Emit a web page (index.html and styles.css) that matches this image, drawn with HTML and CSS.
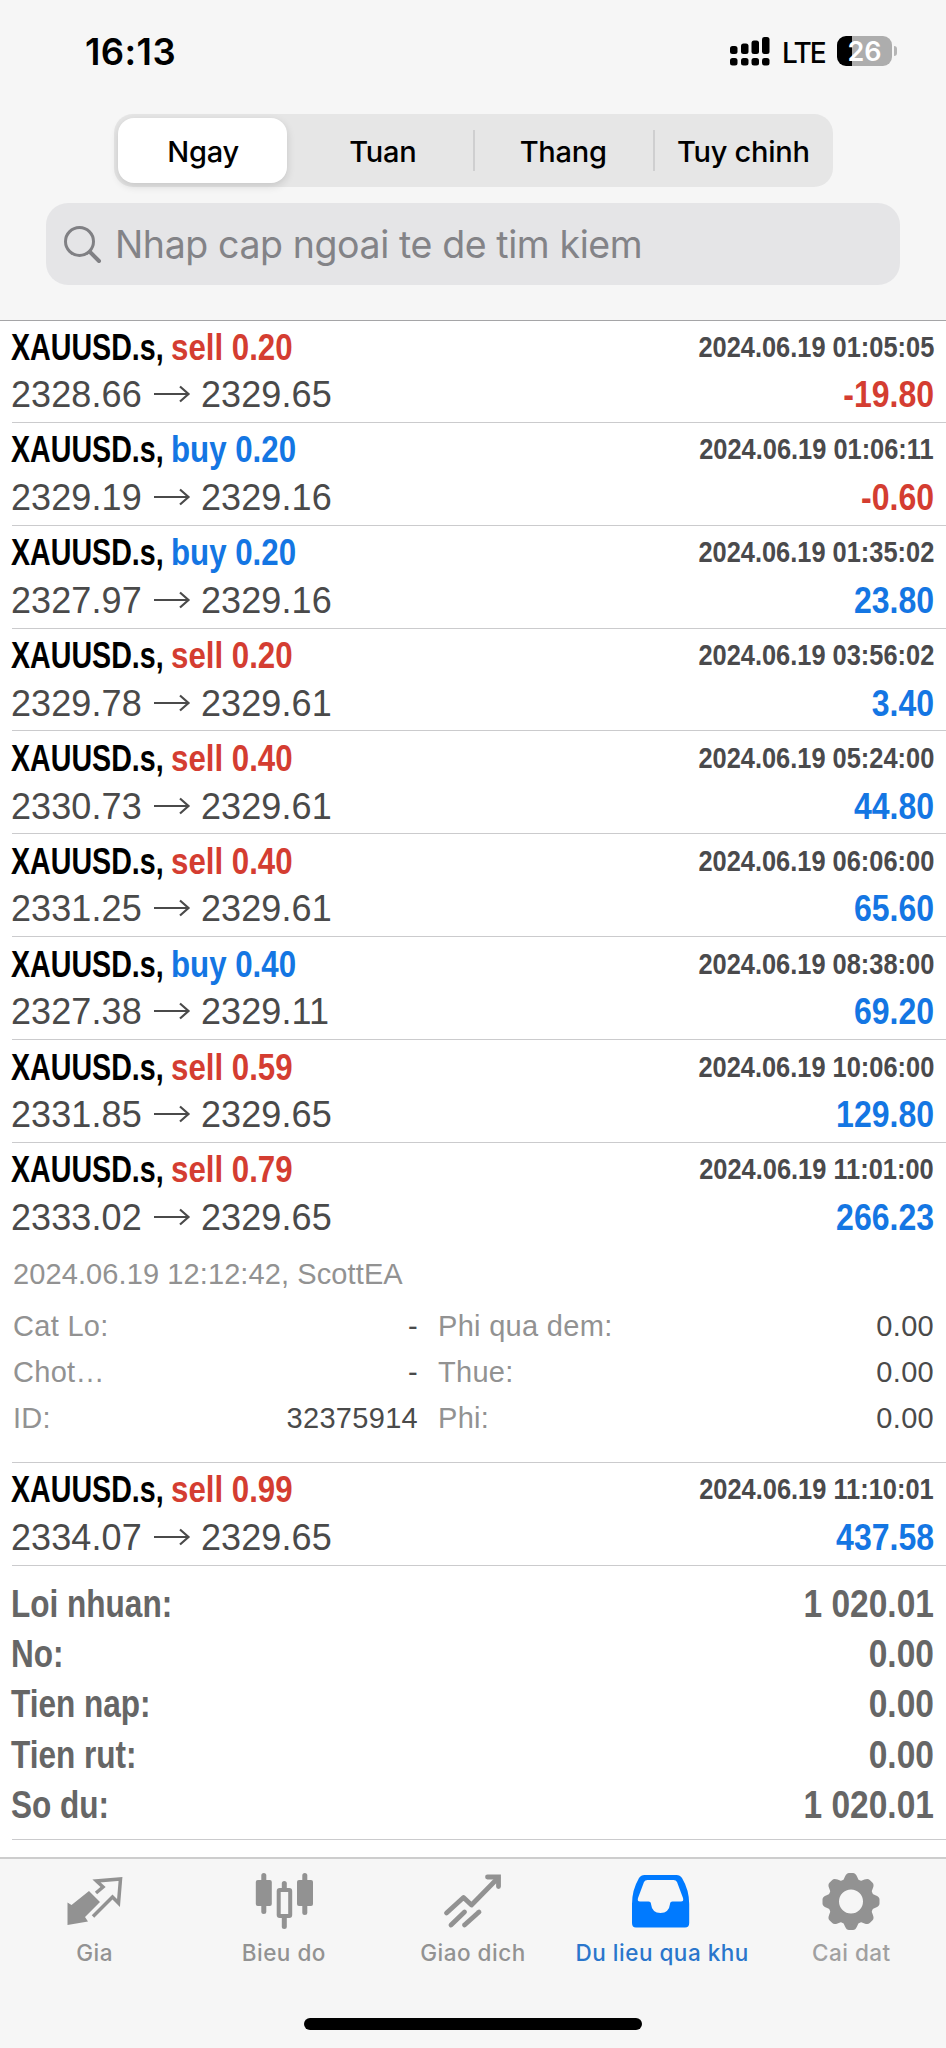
FILE: index.html
```html
<!DOCTYPE html>
<html lang="vi">
<head>
<meta charset="utf-8">
<title>Du lieu qua khu</title>
<link rel="stylesheet" href="styles.css">
</head>
<body>
<div class="screen">
<header class="header">
<div class="status">
<span class="time">16:13</span>
<svg class="signal" width="40" height="30" viewBox="0 0 40 30"><g><rect x="0" y="9" width="7.500" height="8" rx="2.5"/><rect x="11" y="6.500" width="7.500" height="10.500" rx="2.5"/><rect x="21.500" y="3.500" width="7.500" height="13.500" rx="2.5"/><rect x="32" y="0" width="7.500" height="17" rx="2.500"/><rect x="0" y="21" width="7.500" height="7.500" rx="2.500"/><rect x="11" y="21" width="7.500" height="7.500" rx="2.500"/><rect x="21.500" y="21" width="7.500" height="7.500" rx="2.500"/><rect x="32" y="21" width="7.500" height="7.500" rx="2.500"/></g></svg>
<span class="lte">LTE</span>
<span class="battery">26</span><span class="battery-tip"></span>
</div>
<nav class="segments"><span class="segment selected">Ngay</span><span class="segment">Tuan</span><span class="segment divided">Thang</span><span class="segment divided">Tuy chinh</span></nav>
<div class="search">
<svg width="40" height="40" viewBox="0 0 40 40"><circle cx="16.500" cy="17.500" r="14" fill="none" stroke="#808084" stroke-width="3"/><path d="M27 28L36 37" stroke="#808084" stroke-width="4" stroke-linecap="round"/></svg>
<span class="placeholder">Nhap cap ngoai te de tim kiem</span>
</div>
</header>
<main class="list" id="list"></main>
<section class="totals">
<div class="total"><span class="name">Loi nhuan:</span><span class="sum">1 020.01</span></div>
<div class="total"><span class="name">No:</span><span class="sum">0.00</span></div>
<div class="total"><span class="name">Tien nap:</span><span class="sum">0.00</span></div>
<div class="total"><span class="name">Tien rut:</span><span class="sum">0.00</span></div>
<div class="total"><span class="name">So du:</span><span class="sum">1 020.01</span></div>
</section>
<footer class="tabbar">
<div class="tabs">
<div class="tab"><svg width="60" height="60" viewBox="0 0 60 60"><path d="M2.500 22.500L6.500 25L24 11L35 22L20 37L23 41.500L2.500 45Z" fill="#929292"/><path d="M31 13L38 7L31.500 1L55.500 -1L53.500 23L47.500 17L28 36.500" fill="none" stroke="#929292" stroke-width="3.500"/></svg><span>Gia</span></div>
<div class="tab"><svg width="60" height="60" viewBox="0 0 60 60"><g fill="#929292"><rect x="7.300" y="-7" width="5" height="41" rx="2.500"/><rect x="1.800" y="0" width="16" height="26" rx="2"/><rect x="48.300" y="-7" width="5" height="42" rx="2.500"/><rect x="43" y="0" width="16" height="26" rx="2"/><rect x="27.800" y="1" width="5" height="9" rx="2.500"/><rect x="27.800" y="35" width="5" height="14" rx="2.500"/></g><rect x="24.700" y="10" width="11.500" height="26" rx="1" fill="none" stroke="#929292" stroke-width="4"/></svg><span>Bieu do</span></div>
<div class="tab"><svg width="60" height="60" viewBox="0 0 60 60"><g fill="none" stroke="#929292" stroke-width="4.800" stroke-linecap="round" stroke-linejoin="round"><path d="M3.500 33L20.500 17.500L28.500 25L55 -2"/><path d="M44.500 -3H55.500V6.500" stroke-linejoin="miter"/><path d="M8 45L21.500 32"/><path d="M21.500 45L36 32"/></g></svg><span>Giao dich</span></div>
<div class="tab active"><svg width="60" height="60" viewBox="0 0 60 60"><path fill="#007aff" fill-rule="evenodd" d="M12.500 -5H44.500Q48 -5 50 -2Q57.200 10 57.200 24V43Q57.200 47.500 53 47.500H4Q0 47.500 0 43V24Q0 10 7 -2Q9 -5 12.500 -5ZM15.500 0Q13 0 12 2L6 18Q5 21.500 8 21.500H16.500Q19 21.500 19 24Q20 33 28.500 33Q37 33 38 24Q38 21.500 40.500 21.500H49Q52 21.500 51 18L45 2Q44 0 41.500 0Z"/></svg><span>Du lieu qua khu</span></div>
<div class="tab faint"><svg width="60" height="60" viewBox="0 0 60 60"><g id="gear" fill="#929292"></g><circle cx="30" cy="21.500" r="17.500" fill="none" stroke="#929292" stroke-width="11"/></svg><span>Cai dat</span></div>
</div>
<div class="home"></div>
</footer>
</div>
<script src="app.js"></script>
</body>
</html>
```
FILE: app.js
```js
const deals = [
  ['sell', '0.20', '2328.66', '2329.65', '01:05:05', '-19.80'],
  ['buy', '0.20', '2329.19', '2329.16', '01:06:11', '-0.60'],
  ['buy', '0.20', '2327.97', '2329.16', '01:35:02', '23.80'],
  ['sell', '0.20', '2329.78', '2329.61', '03:56:02', '3.40'],
  ['sell', '0.40', '2330.73', '2329.61', '05:24:00', '44.80'],
  ['sell', '0.40', '2331.25', '2329.61', '06:06:00', '65.60'],
  ['buy', '0.40', '2327.38', '2329.11', '08:38:00', '69.20'],
  ['sell', '0.59', '2331.85', '2329.65', '10:06:00', '129.80'],
  ['sell', '0.79', '2333.02', '2329.65', '11:01:00', '266.23', true],
  ['sell', '0.99', '2334.07', '2329.65', '11:10:01', '437.58']
];

const details = `<div class="details">
  <div class="closed">2024.06.19 12:12:42, ScottEA</div>
  <div class="fields">
    <span>Cat Lo:</span><b>-</b><span class="second">Phi qua dem:</span><b>0.00</b>
    <span>Chot…</span><b>-</b><span class="second">Thue:</span><b>0.00</b>
    <span>ID:</span><b>32375914</b><span class="second">Phi:</span><b>0.00</b>
  </div>
</div>`;

const arrow = '<svg class="arrow" width="36" height="18" viewBox="0 0 36 18"><path d="M0 9H34M26 1.500L34.500 9L26 16.500" fill="none" stroke="#4a4a4a" stroke-width="2.200"/></svg>';

document.getElementById('list').innerHTML = deals.map(([side, lots, from, to, time, profit, open]) => `
<article class="deal${open ? ' open' : ''}">
  <div class="line"><span class="symbol">XAUUSD.s,</span><span class="side ${side}">${side} ${lots}</span><span class="date">2024.06.19 ${time}</span></div>
  <div class="line"><span class="price">${from}</span>${arrow}<span class="price">${to}</span><span class="profit ${profit[0] === '-' ? 'sell' : 'buy'}">${profit}</span></div>
  ${open ? details : ''}
</article>`).join('');

// Eight rounded teeth around the ring of the settings icon
document.getElementById('gear').innerHTML = Array.from({ length: 8 }, (_, i) =>
  `<path transform="rotate(${i * 45} 30 21.500)" d="M21.500 2L24 -3.500Q25.500 -7 28 -7H32Q34.500 -7 36 -3.500L38.500 2Z"/>`).join('');
```
FILE: styles.css
```css
* { box-sizing: border-box; }
body { margin: 0; background: #fff; font-family: "Liberation Sans", Arial, sans-serif; }
svg { overflow: visible; flex: none; }
.screen { width: 946px; height: 2048px; overflow: hidden; display: flex; flex-direction: column; }
.header { height: 321px; flex: none; background: #f6f6f6; border-bottom: 1px solid #a5a5a7; font-family: Inter, sans-serif; }
.status { height: 114px; display: flex; align-items: flex-start; padding-left: 85px; }
.time { width: 645px; font-size: 36.5px; line-height: 44px; font-weight: 600; margin-top: 30px; letter-spacing: .4px; }
.signal { margin-top: 37px; }
.lte { font-size: 28px; line-height: 34px; font-weight: 500; margin: 36px 0 0 12px; width: 55px; letter-spacing: -1.8px; }
.battery { width: 55px; height: 30px; margin-top: 36px; border-radius: 9px; background: linear-gradient(90deg, #000 15px, #adadad 15px); color: #fff; font-size: 27px; line-height: 31px; font-weight: 600; text-align: center; }
.battery-tip { width: 3px; height: 10px; margin: 46px 0 0 2px; border-radius: 0 5px 5px 0; background: #b5b5b5; }
.segments { width: 719px; height: 73px; margin-left: 114px; border-radius: 19px; background: #e6e6e6; padding: 4px 0 4px 4px; display: flex; }
.segment { width: 181px; height: 65px; display: flex; align-items: center; justify-content: center; font-size: 29px; font-weight: 450; line-height: 36px; padding: 2px 0 0 1px; letter-spacing: -.25px; }
.segment.selected { width: 170px; border-radius: 16px; background: #fff; box-shadow: 0 3px 8px rgba(0,0,0,.14); margin-right: 5px; font-weight: 550; }
.segment.divided { background: linear-gradient(#cfcfd0, #cfcfd0) 0 12px / 2px 41px no-repeat; }
.search { margin: 16px 0 0 46px; width: 854px; height: 82px; border-radius: 22px; background: #e5e5e7; display: flex; align-items: center; padding-left: 17px; }
.placeholder { margin: 1px 0 0 12px; font-size: 37.5px; color: #838387; white-space: nowrap; letter-spacing: -.4px; }
.list { margin-top: -1px; }
.deal { height: 102.86px; margin-left: 12px; padding: 3.5px 12px 0 0; border-bottom: 1px solid #cbcbcd; }
.deal.open { height: 320px; }
.line { height: 47.7px; line-height: 47.7px; font-size: 36px; display: flex; white-space: nowrap; }
.symbol { width: 159px; font-weight: 700; color: #000; transform: translateX(-1px) scaleX(.795); transform-origin: left; }
.side { font-weight: 700; transform: scaleX(.868); transform-origin: left; }
.sell { color: #d43d31; }
.buy { color: #1476e3; }
.date { margin-left: auto; font-size: 29px; line-height: 46px; font-weight: 700; color: #4a4a4c; transform: scaleX(.876); transform-origin: right; }
.price { color: #4a4a4a; width: 142px; margin-left: -1px; letter-spacing: .1px; }
.price + .arrow { margin: 14px 12px 0 1px; }
.profit { margin-left: auto; font-weight: 700; transform: scaleX(.89); transform-origin: right; }
.details { color: #929292; font-size: 29px; padding-left: 1px; }
.closed { margin-top: 3.7px; line-height: 59.4px; letter-spacing: .1px; }
.fields { display: grid; grid-template-columns: 200px 205px 280px 1fr; line-height: 45.7px; margin-top: -.6px; letter-spacing: .3px; }
.fields b { font-weight: 400; color: #4a4a4a; text-align: right; }
.second { padding-left: 20px; }
.totals { height: 274px; flex: none; margin-left: 12px; padding: 12.9px 12px 0 0; border-bottom: 1px solid #cbcbcd; }
.total { display: flex; justify-content: space-between; height: 50.3px; line-height: 50.3px; font-size: 38px; font-weight: 700; color: #666; }
.name { transform: translateX(-1px) scaleX(.83); transform-origin: left; }
.sum { transform: scaleX(.882); transform-origin: right; }
.tabbar { height: 191px; flex: none; margin-top: auto; background: #f6f6f6; border-top: 2px solid #cdcdcd; font-family: Inter, sans-serif; }
.tabs { display: grid; grid-template-columns: repeat(5, 1fr); height: 159px; }
.tab { display: flex; flex-direction: column; align-items: center; padding-top: 21px; color: #929292; font-size: 22.5px; font-weight: 450; letter-spacing: .5px; }
.tab span { line-height: 28px; margin-top: -1px; white-space: nowrap; }
.active { color: #2a76cc; }
.faint { color: #a0a0a0; }
.home { width: 338px; height: 12px; margin: 0 auto; border-radius: 6px; background: #000; }
```
